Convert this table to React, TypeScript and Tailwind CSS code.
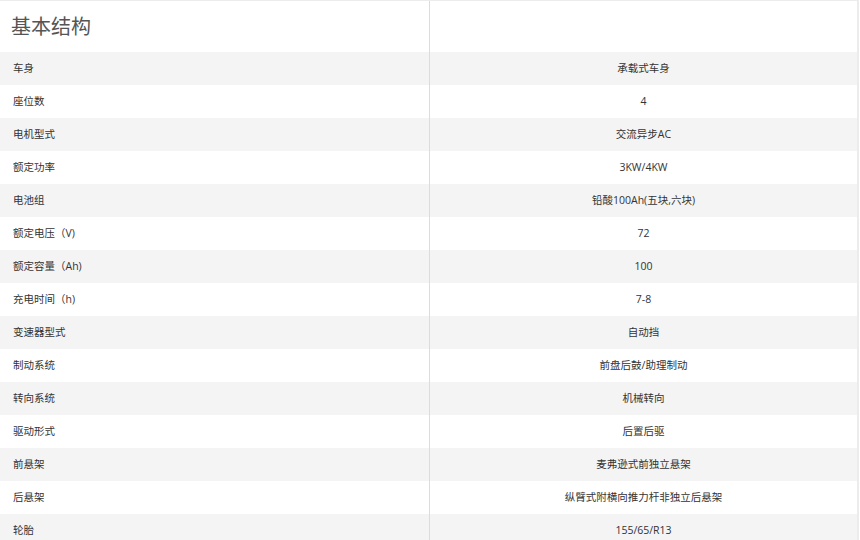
const specs: [string, string][] = [
  ["车身", "承载式车身"],
  ["座位数", "4"],
  ["电机型式", "交流异步AC"],
  ["额定功率", "3KW/4KW"],
  ["电池组", "铅酸100Ah(五块,六块)"],
  ["额定电压（V)", "72"],
  ["额定容量（Ah)", "100"],
  ["充电时间（h)", "7-8"],
  ["变速器型式", "自动挡"],
  ["制动系统", "前盘后鼓/助理制动"],
  ["转向系统", "机械转向"],
  ["驱动形式", "后置后驱"],
  ["前悬架", "麦弗逊式前独立悬架"],
  ["后悬架", "纵臂式附横向推力杆非独立后悬架"],
  ["轮胎", "155/65/R13"],
];

export default function App() {
  return (
    <div className="w-[860px] h-[540px] overflow-hidden bg-white font-['Open_Sans','Noto_Sans_CJK_SC',sans-serif]">
      <div className="w-[859px] border-t border-r-2 border-[#ececec]">
        {/* header row */}
        <div className="flex h-[51px]">
          <div className="w-[429px] flex items-center pl-[11px] text-[20px] text-[#555]">
            基本结构
          </div>
          <div className="flex-1 border-l border-[#dcdcdc]" />
        </div>
        {specs.map(([label, value], i) => (
          <div
            key={label}
            className={`flex h-[33px] text-[10.5px] text-[#333] ${i % 2 === 0 ? "bg-[#f4f4f4]" : "bg-white"}`}
          >
            <div className="w-[429px] flex items-center pl-[13px]">{label}</div>
            <div className="flex-1 flex items-center justify-center border-l border-[#dcdcdc]">
              {value}
            </div>
          </div>
        ))}
      </div>
    </div>
  );
}
